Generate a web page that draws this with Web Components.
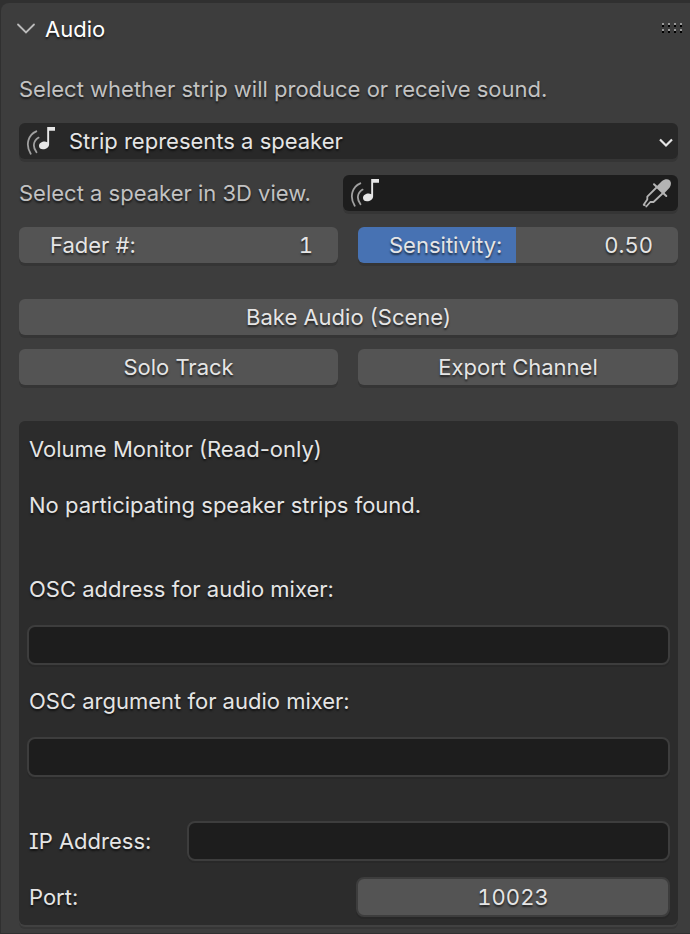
<!DOCTYPE html>
<html lang="en">
<head>
<meta charset="utf-8">
<meta name="viewport" content="width=device-width, initial-scale=1">
<title>Audio</title>
<style>
body {
  margin: 0;
  min-height: 100vh;
  box-sizing: border-box;
  padding: 3px 0 0 1px;
  background: #303030;
  color: #e5e5e5;
  font: 22px/36px Inter, "Liberation Sans", sans-serif;
  font-feature-settings: "cv08";
  --field: #1d1d1d;
  --control: #545454;
  --text-shadow: 0 2px 2px rgba(0, 0, 0, .6);
  --drop: 0 3px 0 #353535;
  text-shadow: var(--text-shadow);
}
</style>
</head>
<body>
<ui-panel heading="Audio">
  <ui-note>Select whether strip will produce or receive sound.</ui-note>
  <ui-select label="Strip role" value="Strip represents a speaker"></ui-select>
  <ui-picker label="Select a speaker in 3D view."></ui-picker>
  <ui-pair>
    <ui-number label="Fader #:" value="1"></ui-number>
    <ui-slider label="Sensitivity:" value="0.50"></ui-slider>
  </ui-pair>
  <ui-pair single>
    <ui-button>Bake Audio (Scene)</ui-button>
  </ui-pair>
  <ui-pair class="tight">
    <ui-button>Solo Track</ui-button>
    <ui-button>Export Channel</ui-button>
  </ui-pair>
  <ui-box>
    <ui-note strong>Volume Monitor (Read-only)</ui-note>
    <ui-note strong>No participating speaker strips found.</ui-note>
    <ui-field class="group" label="OSC address for audio mixer:" stacked></ui-field>
    <ui-field label="OSC argument for audio mixer:" stacked></ui-field>
    <ui-field class="section" label="IP Address:"></ui-field>
    <ui-field label="Port:" value="10023" numeric></ui-field>
  </ui-box>
</ui-panel>
<script>
const define = (name, render) => customElements.define(name, class extends HTMLElement {
  connectedCallback() {
    if (this.shadowRoot) return;
    const attr = key => this.getAttribute(key) ?? "";
    this.attachShadow({ mode: "open" }).innerHTML =
      `<style>*{box-sizing:border-box}:host{display:block;min-width:0}input,select,button{font:inherit;font-feature-settings:inherit;color:inherit;text-shadow:inherit;margin:0;border:0;outline-offset:2px}input,output{font-variant-numeric:tabular-nums}</style>` + render(attr);
  }
});

const speakerIcon = `<svg class="icon" width="30" height="30" viewBox="0 0 30 30" aria-hidden="true">
  <path d="M10.300 5.300C2.500 8.500 -1 18.500 4.700 27.800M12.600 11.600C7 15 6.500 21 10.500 26.300" fill="none" stroke="#a0a0a0" stroke-width="1.800" stroke-linecap="round"/>
  <path d="M21.200 1H29V4.800H23.100V18.500C23 21.500 20 23.300 17 23.300C14.500 23.300 13 22 13 20C13 17.300 15.800 15.600 18.600 15.600Q20 15.600 21.200 16.200Z" fill="#e6e6e6"/></svg>`;

define("ui-panel", attr => `
<style>
:host{background:#3d3d3d;border-radius:8px 0 0 0;padding:8px 12px 8px 18px}
header{display:flex;align-items:center;justify-content:space-between;margin:0 -6px 24px -4px}
button{display:flex;align-items:center;gap:8px;background:none;padding:0;color:#fff}
.body{display:flex;flex-direction:column;gap:16px}
</style>
<header>
  <button aria-expanded="true"><svg width="22" height="22" viewBox="0 0 22 22" aria-hidden="true"><path d="M3 6.500l8 8 8-8" fill="none" stroke="#bbb" stroke-width="1.800" stroke-linecap="round"/></svg>${attr("heading")}</button>
  <svg width="22" height="12" viewBox="0 0 22 12" shape-rendering="crispEdges" aria-hidden="true"><g fill="#000"><path d="M0 2h2v2H0zM6 2h2v2H6zM12 2h2v2h-2zM18 2h2v2h-2zM0 8h2v2H0zM6 8h2v2H6zM12 8h2v2h-2zM18 8h2v2h-2z"/></g><g fill="#999"><path d="M0 0h2v2H0zM6 0h2v2H6zM12 0h2v2h-2zM18 0h2v2h-2zM0 6h2v2H0zM6 6h2v2H6zM12 6h2v2h-2zM18 6h2v2h-2z"/></g></svg>
</header>
<div class="body"><slot></slot></div>`);

define("ui-note", () => `<style>:host{color:#c2c2c2}:host([strong]){color:inherit}</style><slot></slot>`);

define("ui-select", attr => `
<style>
:host{display:grid;align-items:center;background:#282828;border-radius:6px;box-shadow:var(--drop)}
select,svg{grid-area:1/1}
select{appearance:none;background:none;width:100%;height:36px;padding:0 40px 0 50px;border-radius:6px}
svg{pointer-events:none}
.icon{margin-left:7px}
.arrow{justify-self:end;margin-right:4px}
</style>
<select aria-label="${attr("label")}"><option>${attr("value")}</option></select>
${speakerIcon}
<svg class="arrow" width="16" height="16" viewBox="0 0 16 16" aria-hidden="true"><path d="M2 6.500l6 6 6-6" fill="none" stroke="#e6e6e6" stroke-width="2.200"/></svg>`);

define("ui-picker", attr => `
<style>
:host{display:grid;grid-template-columns:minmax(0,324fr) minmax(0,335fr);align-items:center}
label{color:#c2c2c2;white-space:nowrap}
.box{display:flex;align-items:center;height:36px;padding:0 6px 0 7px;background:var(--field);border-radius:6px;box-shadow:var(--drop)}
.icon{flex:none}
input{flex:1;min-width:0;height:36px;background:none}
button{display:flex;padding:0;background:none}
</style>
<label for="speaker">${attr("label")}</label>
<div class="box">${speakerIcon}<input id="speaker"><button aria-label="Pick from view">
<svg width="30" height="30" viewBox="0 0 30 30" aria-hidden="true">
<path d="M12 6.200L24.300 18" stroke="#b4b4b4" stroke-width="2" stroke-linecap="round"/>
<path d="M14.500 8.500L20 3C23 .6 26 .8 27.800 2.400C29.500 4.300 29.300 7 27.500 9.800L21.800 15.800Z" fill="#b4b4b4"/>
<path d="M14.500 9.500L5.300 18.700V21.500L1.700 26.800M20.500 15.500L11.500 24H8.300L4.300 28.500M1.700 26.800L2.800 27.200" fill="none" stroke="#b4b4b4" stroke-width="1.800" stroke-linecap="round" stroke-linejoin="round"/></svg></button></div>`);

define("ui-pair", () => `<style>:host{display:grid;grid-template-columns:319fr 320fr;gap:20px}:host([single]){grid-template-columns:1fr;margin-top:20px}:host(.tight){margin-top:-2px}</style><slot></slot>`);

define("ui-number", attr => `
<style>
:host{display:flex;background:var(--control);border-radius:6px;box-shadow:var(--drop);padding:0 25px 0 31px}
label{flex:none}
input{flex:1;min-width:0;height:36px;padding:0;background:none;text-align:right}
</style><label for="n">${attr("label")}</label><input id="n" inputmode="numeric" value="${attr("value")}">`);

define("ui-slider", attr => `
<style>
:host{display:grid;border-radius:6px;box-shadow:var(--drop)}
input,.text{grid-area:1/1}
input{appearance:none;width:100%;height:36px;border-radius:6px;background:linear-gradient(90deg,#4772b3 49.400%,var(--control) 49.400%)}
input::-webkit-slider-thumb{appearance:none;width:1px;height:36px;background:none}
.text{display:flex;justify-content:space-between;padding:0 25px 0 31px;pointer-events:none;z-index:1}
</style>
<input id="s" type="range" min="0" max="1" step="0.01" value="${attr("value")}">
<div class="text"><label for="s">${attr("label")}</label><output for="s">${attr("value")}</output></div>`);

define("ui-button", () => `
<style>button{width:100%;height:36px;padding:0;background:var(--control);border-radius:6px;box-shadow:var(--drop)}</style>
<button><slot></slot></button>`);

define("ui-box", () => `
<style>
:host{display:flex;flex-direction:column;gap:20px;margin-top:20px;padding:10px 8px 8px;background:#2c2c2c;border-radius:6px;box-shadow:0 2px 0 #414141,0 4px 0 #363636}
::slotted(ui-note){padding-left:2px}
::slotted(ui-field){margin-top:-4px}
::slotted([stacked]){margin-top:-2px}
::slotted(.group){margin-top:28px}
::slotted(.section){margin-top:24px}
</style><slot></slot>`);

define("ui-field", attr => `
<style>
:host{display:grid;grid-template-columns:160fr 483fr;align-items:center}
:host([numeric]){grid-template-columns:329fr 314fr}
:host([stacked]){grid-template-columns:1fr;row-gap:18px}
label{padding-left:2px}
input{width:100%;min-width:0;height:40px;padding:0 8px;background:var(--field);border:2px solid #3d3d3d;border-radius:8px;box-shadow:0 2px 0 #282828}
:host([numeric]) input{background:var(--control);text-align:center}
</style><label for="f">${attr("label")}</label><input id="f" value="${attr("value")}">`);
</script>
</body>
</html>
